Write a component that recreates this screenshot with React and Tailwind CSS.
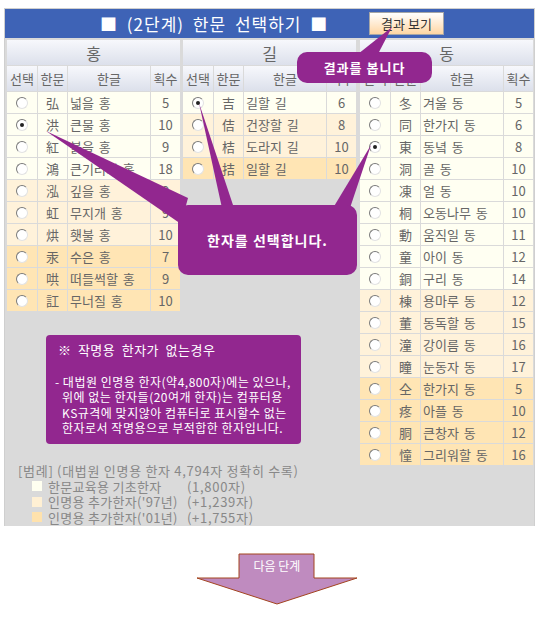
import React from "react";

const rowBg = ["bg-[#fffff2]", "bg-[#fff2da]", "bg-[#ffe5b4]"];

const hong = [
  ["弘", "넓을 홍", 5, 0],
  ["洪", "큰물 홍", 10, 0, true],
  ["紅", "붉을 홍", 9, 0],
  ["鴻", "큰기러기 홍", 18, 0],
  ["泓", "깊을 홍", 9, 1],
  ["虹", "무지개 홍", 9, 1],
  ["烘", "횃불 홍", 10, 1],
  ["汞", "수은 홍", 7, 2],
  ["哄", "떠들썩할 홍", 9, 2],
  ["訌", "무너질 홍", 10, 2],
];

const gil = [
  ["吉", "길할 길", 6, 0, true],
  ["佶", "건장할 길", 8, 1],
  ["桔", "도라지 길", 10, 1],
  ["拮", "일할 길", 10, 2],
];

const dong = [
  ["冬", "겨울 동", 5, 0],
  ["同", "한가지 동", 6, 0],
  ["東", "동녘 동", 8, 0, true],
  ["洞", "골 동", 10, 0],
  ["凍", "얼 동", 10, 0],
  ["桐", "오동나무 동", 10, 0],
  ["動", "움직일 동", 11, 0],
  ["童", "아이 동", 12, 0],
  ["銅", "구리 동", 14, 0],
  ["棟", "용마루 동", 12, 1],
  ["董", "동독할 동", 15, 1],
  ["潼", "강이름 동", 16, 1],
  ["瞳", "눈동자 동", 17, 1],
  ["仝", "한가지 동", 5, 2],
  ["疼", "아플 동", 10, 2],
  ["胴", "큰창자 동", 12, 2],
  ["憧", "그리워할 동", 16, 2],
];

function Radio({ checked }) {
  return (
    <span className="flex h-[12px] w-[12px] items-center justify-center rounded-full border border-t-[#7a7a7a] border-l-[#7a7a7a] border-b-[#e2e2e2] border-r-[#e2e2e2] bg-white">
      {checked && <span className="h-[4px] w-[4px] rounded-full bg-[#222]" />}
    </span>
  );
}

function HanjaTable({ title, rows }) {
  const head = "bg-linear-to-b from-[#f7f8fc] to-[#dce0eb]";
  return (
    <div className="flex w-[173px] flex-col gap-px">
      <div className={`flex h-[25px] items-center justify-center text-[16px] text-[#666] ${head}`}>
        {title}
      </div>
      <div className="grid h-[25px] grid-cols-[30px_29px_82px_29px] gap-x-px text-[13px] text-[#666]">
        {["선택", "한문", "한글", "획수"].map((h) => (
          <div key={h} className={`flex items-center justify-center ${head}`}>
            {h}
          </div>
        ))}
      </div>
      {rows.map(([han, kor, strokes, kind, checked]) => (
        <div
          key={han}
          className="grid h-[21px] grid-cols-[30px_29px_82px_29px] gap-x-px text-[13px] text-[#666]"
        >
          <div className={`flex items-center justify-center ${rowBg[kind]}`}>
            <Radio checked={checked} />
          </div>
          <div className={`flex items-center justify-center ${rowBg[kind]}`}>{han}</div>
          <div className={`flex items-center whitespace-nowrap pl-[2px] [word-spacing:2px] ${rowBg[kind]}`}>{kor}</div>
          <div className={`flex items-center justify-center ${rowBg[kind]}`}>{strokes}</div>
        </div>
      ))}
    </div>
  );
}

export default function App() {
  return (
    <div className="relative h-[643px] w-[540px] overflow-hidden bg-white pl-[4px] pt-[8px] font-['Noto_Sans_CJK_KR','Noto_Sans',sans-serif]">
      {/* ================= PANEL ================= */}
      <div className="w-[531px] border border-b-0 border-[#cfcfcf] bg-[#dadada]">
        <div className="flex h-[29px] items-center bg-[#3e63b6] pl-[95px]">
          <span className="whitespace-nowrap text-[17px] tracking-[1px] text-white [word-spacing:4px]">■ (2단계) 한문 선택하기 ■</span>
          <button className="ml-auto mr-[90px] h-[23px] w-[75px] border border-[#a6a6a6] bg-linear-to-b from-white to-[#ffd6a3] text-[13px] text-[#333]">
            결과 보기
          </button>
        </div>

        <div className="mt-[2px] flex gap-[4px] pl-[2px] pr-px">
          {/* left: tables + notes */}
          <div className="flex w-[349px] flex-col">
            <div className="flex items-start gap-[3px]">
              <HanjaTable title="홍" rows={hong} />
              <HanjaTable title="길" rows={gil} />
            </div>

            <div className="ml-[39px] mt-[24px] h-[109px] w-[255px] whitespace-nowrap rounded-[4px] bg-[#92278f] pl-[9px] pt-[7px] text-[12px] leading-[15.5px] tracking-[0.5px] text-white">
              <div className="pl-[3px] text-[13px] [word-spacing:3px]">※ 작명용 한자가 없는경우</div>
              <div className="mt-[16px]">- 대법원 인명용 한자(약4,800자)에는 있으나,</div>
              <div className="pl-[7px]">위에 없는 한자들(20여개 한자)는 컴퓨터용</div>
              <div className="pl-[7px]">KS규격에 맞지않아 컴퓨터로 표시할수 없는</div>
              <div className="pl-[7px]">한자로서 작명용으로 부적합한 한자입니다.</div>
            </div>

            <div className="mt-[19px] whitespace-nowrap pb-[1px] pl-[11px] text-[13px] leading-[15.5px] text-[#888]">
              <div className="tracking-[0.7px]">[범례] (대법원 인명용 한자 4,794자 정확히 수록)</div>
              {[
                ["한문교육용 기초한자", "(1,800자)", "bg-[#fffff0]"],
                ["인명용 추가한자('97년)", "(+1,239자)", "bg-[#fff0d4]"],
                ["인명용 추가한자('01년)", "(+1,755자)", "bg-[#ffe2ad]"],
              ].map(([label, count, sq]) => (
                <div key={label} className="flex items-center pl-[14px] tracking-[0.3px]">
                  <span className={`mr-[6px] h-[10px] w-[10px] ${sq}`} />
                  <span className="w-[139px]">{label}</span>
                  <span className="tracking-[0.7px]">{count}</span>
                </div>
              ))}
            </div>
          </div>

          {/* right table */}
          <HanjaTable title="동" rows={dong} />
        </div>
      </div>

      {/* ================= NEXT STEP ARROW ================= */}
      <div className="ml-[192px] mt-[27px]">
        <svg width="164" height="54" viewBox="0 0 164 54">
          <polygon
            points="43,1 118,1 118,25 161,25 81,51 1,25 43,25"
            fill="#bf8bbf"
            stroke="#a3441f"
            strokeWidth="1"
          />
          <text x="81" y="17.5" textAnchor="middle" fill="white" fontSize="12">
            다음 단계
          </text>
        </svg>
      </div>

      {/* ================= CALLOUTS ================= */}
      <svg className="pointer-events-none absolute left-0 top-0" width="540" height="643">
        <polygon points="392,27 358,54 378,54" fill="#92278f" />
        <polygon points="46,131 188,198 181,224" fill="#92278f" />
        <polygon points="199,103 222,208 234,208" fill="#92278f" />
        <polygon points="371,145 333,208 350,208" fill="#92278f" />
      </svg>
      <div className="absolute left-[297px] top-[52px] flex h-[31px] w-[135px] items-center justify-center rounded-[10px] bg-[#92278f] text-[13px] font-bold tracking-[1px] text-white">
        결과를 봅니다
      </div>
      <div className="absolute left-[178px] top-[205px] flex h-[70px] w-[179px] items-center justify-center rounded-[10px] bg-[#92278f] text-[14px] font-bold tracking-[1px] text-white">
        한자를 선택합니다.
      </div>
    </div>
  );
}
